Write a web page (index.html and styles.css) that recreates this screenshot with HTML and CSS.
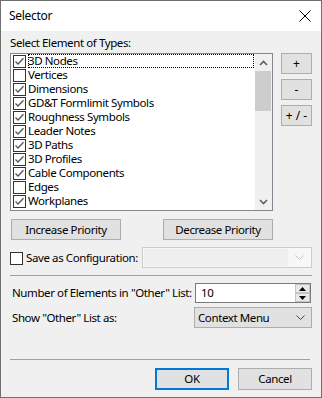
FILE: index.html
```html
<!DOCTYPE html>
<html>
<head>
<meta charset="utf-8">
<link rel="stylesheet" href="styles.css">
</head>
<body>
<div class="win">
  <div class="titlebar">
    <span class="title">Selector</span>
    <svg class="close" width="12" height="12" viewBox="0 0 12 12"><path d="M0.5 0.5 L11.5 11.5 M11.5 0.5 L0.5 11.5" stroke="#000" stroke-width="1" fill="none"/></svg>
  </div>
  <div class="content">
    <div class="label-top">Select Element of Types:</div>
    <div class="row-list">
      <div class="listbox">
        <ul class="items">
          <li class="item"><span class="cb on"></span><span class="txt focus">3D Nodes</span></li>
          <li class="item"><span class="cb"></span><span class="txt">Vertices</span></li>
          <li class="item"><span class="cb on"></span><span class="txt">Dimensions</span></li>
          <li class="item"><span class="cb on"></span><span class="txt">GD&amp;T Formlimit Symbols</span></li>
          <li class="item"><span class="cb on"></span><span class="txt">Roughness Symbols</span></li>
          <li class="item"><span class="cb on"></span><span class="txt">Leader Notes</span></li>
          <li class="item"><span class="cb on"></span><span class="txt">3D Paths</span></li>
          <li class="item"><span class="cb on"></span><span class="txt">3D Profiles</span></li>
          <li class="item"><span class="cb on"></span><span class="txt">Cable Components</span></li>
          <li class="item"><span class="cb"></span><span class="txt">Edges</span></li>
          <li class="item"><span class="cb on"></span><span class="txt">Workplanes</span></li>
        </ul>
        <div class="vscroll">
          <div class="sb-arrow"><svg width="9" height="6" viewBox="0 0 9 6"><path d="M1 5 L4.5 1.5 L8 5" stroke="#606060" stroke-width="1.6" fill="none"/></svg></div>
          <div class="sb-thumb"></div>
          <div class="sb-track"></div>
          <div class="sb-arrow"><svg width="9" height="6" viewBox="0 0 9 6"><path d="M1 1 L4.5 4.5 L8 1" stroke="#606060" stroke-width="1.6" fill="none"/></svg></div>
        </div>
      </div>
      <div class="side-btns">
        <button class="btn small">+</button>
        <button class="btn small">-</button>
        <button class="btn small">+ / -</button>
      </div>
    </div>
    <div class="row-prio">
      <button class="btn prio first">Increase Priority</button>
      <button class="btn prio">Decrease Priority</button>
    </div>
    <div class="row-save">
      <span class="cb big"></span>
      <span class="save-label">Save as Configuration:</span>
      <div class="combo disabled">
        <div class="combo-field"></div>
        <svg class="chev" width="9" height="5" viewBox="0 0 9 5"><path d="M0.5 0.5 L4.5 4.5 L8.5 0.5" stroke="#c4c4c4" stroke-width="1" fill="none"/></svg>
      </div>
    </div>
    <div class="sep"></div>
    <div class="row-opt first-opt">
      <span class="opt-label">Number of Elements in "Other" List:</span>
      <div class="spin">
        <span class="spin-val">10</span>
        <div class="spin-btns">
          <div class="spin-btn"><svg width="7" height="4" viewBox="0 0 7 4"><path d="M0 4 L3.5 0 L7 4 Z" fill="#000"/></svg></div>
          <div class="spin-btn"><svg width="7" height="4" viewBox="0 0 7 4"><path d="M0 0 L3.5 4 L7 0 Z" fill="#000"/></svg></div>
        </div>
      </div>
    </div>
    <div class="row-opt second-opt">
      <span class="opt-label">Show "Other" List as:</span>
      <div class="combo normal">
        <span class="combo-text">Context Menu</span>
        <svg class="chev" width="9" height="5" viewBox="0 0 9 5"><path d="M0.5 0.5 L4.5 4.5 L8.5 0.5" stroke="#444" stroke-width="1" fill="none"/></svg>
      </div>
    </div>
    <div class="sep bottom-sep"></div>
    <div class="row-ok">
      <button class="btn dlg default">OK</button>
      <button class="btn dlg">Cancel</button>
    </div>
  </div>
</div>
</body>
</html>
```

FILE: styles.css
```css
* { box-sizing: border-box; }
html, body { margin: 0; padding: 0; }
body {
  width: 322px;
  height: 398px;
  overflow: hidden;
  font-family: "Noto Sans", "Open Sans", sans-serif;
  font-size: 11.5px;
  letter-spacing: -0.4px;
  color: #000;
  background: #f0f0f0;
}
.win {
  width: 322px;
  height: 398px;
  border: 1px solid #707070;
  background: #f0f0f0;
  display: flex;
  flex-direction: column;
}
.titlebar {
  height: 30px;
  flex: none;
  background: #fff;
  display: flex;
  align-items: center;
  justify-content: space-between;
  padding: 0 10px 0 8px;
}
.title { font-size: 12px; letter-spacing: -0.3px; line-height: 14px; }
.close { display: block; }
.content {
  padding: 5px 9px 0 9px;
  display: flex;
  flex-direction: column;
  white-space: nowrap;
}
.label-top { line-height: 14px; height: 14px; }
.row-list {
  margin-top: 3px;
  display: flex;
  align-items: flex-start;
  gap: 8px;
}
.listbox {
  width: 263px;
  height: 158px;
  border: 1px solid #828790;
  background: #fff;
  display: flex;
}
.items {
  flex: 1;
  list-style: none;
  margin: 0;
  padding: 0 0 0 2px;
}
.item {
  height: 14px;
  display: flex;
  align-items: flex-start;
}
.cb {
  flex: none;
  width: 13px;
  height: 13px;
  margin-top: 1px;
  margin-right: 2px;
  border: 1px solid #333;
  background: #fff;
}
.cb.on {
  background: #fff url("data:image/svg+xml;utf8,<svg xmlns='http://www.w3.org/2000/svg' width='11' height='11' viewBox='0 0 11 11'><path d='M1.5 5.5 L4 8 L9.5 2.2' stroke='%23555' stroke-width='1.3' fill='none'/></svg>") no-repeat center;
}
.txt {
  flex: 1;
  height: 14px;
  line-height: 14px;
  margin-right: 1px;
  white-space: nowrap;
}
.txt.focus { outline: 1px dotted #000; outline-offset: -1px; }
.vscroll {
  width: 17px;
  flex: none;
  background: #f0f0f0;
  display: flex;
  flex-direction: column;
}
.sb-arrow {
  height: 17px;
  flex: none;
  display: flex;
  align-items: center;
  justify-content: center;
}
.sb-thumb { height: 40px; flex: none; background: #cdcdcd; margin-right: 1px; }
.sb-track { flex: 1; }
.btn {
  font-family: inherit;
  font-size: 11.5px;
  letter-spacing: -0.4px;
  color: #000;
  background: #e1e1e1;
  border: 1px solid #adadad;
  padding: 0;
  margin: 0;
  line-height: 14px;
  border-radius: 0;
  white-space: nowrap;
}
.side-btns { display: flex; flex-direction: column; gap: 5px; }
.btn.small { width: 31px; height: 21px; font-size: 12px; letter-spacing: 0; }
.row-prio {
  margin-top: 8px;
  display: flex;
  justify-content: space-between;
  width: 263px;
}
.btn.prio { width: 110px; height: 21px; }
.btn.prio.first { margin-left: 1px; }
.row-save {
  margin-top: 7px;
  height: 21px;
  display: flex;
  align-items: center;
}
.cb.big { margin: 1px 3px 0 0; }
.save-label { line-height: 14px; }
.combo {
  margin-left: auto;
  height: 21px;
  display: flex;
  align-items: center;
  border: 1px solid;
}
.combo.disabled {
  width: 170px;
  border-color: #cccccc;
  background: #f7f7f7;
  padding: 1px;
}
.combo-field { flex: 1; height: 17px; background: #efefef; }
.combo.disabled .chev { margin: 0 6px 0 7px; }
.sep { height: 1px; background: #a0a0a0; margin-top: 7px; }
.row-opt { display: flex; align-items: center; }
.first-opt { margin-top: 7px; height: 20px; }
.second-opt { margin-top: 4px; height: 21px; }
.opt-label { padding-left: 2px; line-height: 14px; }
.spin {
  margin-left: auto;
  margin-right: 1px;
  width: 116px;
  height: 20px;
  border: 1px solid #7a7a7a;
  background: #fff;
  display: flex;
  align-items: center;
}
.spin-val { flex: 1; padding-left: 5px; line-height: 14px; }
.spin-btns {
  width: 15px;
  height: 18px;
  display: flex;
  flex-direction: column;
}
.spin-btn {
  flex: 1;
  background: #e9e9e9;
  border: 1px solid #c4c4c4;
  display: flex;
  align-items: center;
  justify-content: center;
}
.combo.normal {
  width: 118px;
  background: #e1e1e1;
  border-color: #adadad;
}
.combo-text { flex: 1; padding-left: 3px; line-height: 14px; }
.combo.normal .chev { margin-right: 6px; }
.bottom-sep { margin-top: 31px; width: 300px; }
.row-ok {
  margin-top: 8px;
  display: flex;
  justify-content: flex-end;
  gap: 9px;
}
.btn.dlg { width: 74px; height: 22px; }
.btn.default { border: 2px solid #0078d7; }
```
